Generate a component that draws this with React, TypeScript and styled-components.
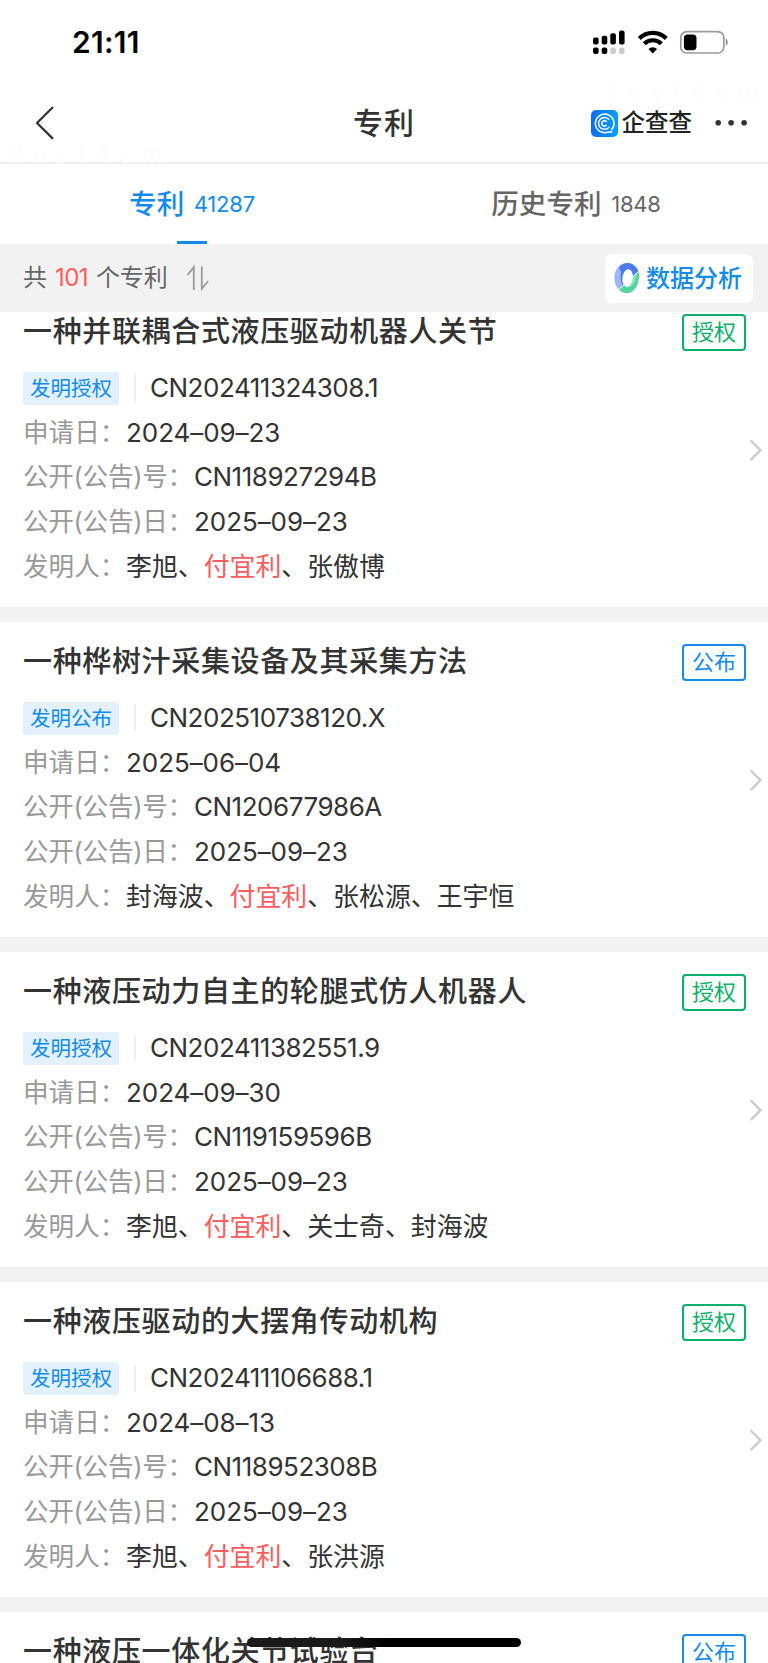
import React from 'react';
import styled, { createGlobalStyle } from 'styled-components';

const Global = createGlobalStyle`
  * { box-sizing: border-box; }
  body {
    margin: 0;
    background: #fff;
    font-family: Inter, "Noto Sans CJK SC", sans-serif;
    color: #333;
  }
`;

const Screen = styled.div`
  position: relative;
  width: 768px;
  height: 1663px;
  overflow: hidden;
  display: flex;
  flex-direction: column;
  white-space: nowrap;
`;

const StatusBar = styled.header`
  flex: none;
  height: 84px;
  display: flex;
  justify-content: space-between;
  align-items: center;
  padding: 0 39px 0 72px;
`;

const Clock = styled.time`
  font-size: 30px;
  font-weight: 600;
  color: #000;
  line-height: 30px;
  letter-spacing: 0.3px;
`;

const NavBar = styled.nav`
  flex: none;
  height: 80px;
  border-bottom: 2px solid #efefef;
  display: grid;
  grid-template-columns: 1fr auto 1fr;
  align-items: center;
  padding: 0 20px;
`;

const NavTitle = styled.h1`
  margin: 0;
  font-size: 30px;
  line-height: 40px;
  font-weight: 500;
  letter-spacing: 1px;
`;

const NavRight = styled.div`
  display: flex;
  justify-content: flex-end;
  align-items: center;
`;

const BrandName = styled.span`
  margin: 0 22px 0 4px;
  font-size: 23.5px;
  line-height: 30px;
  font-weight: 500;
  color: #222;
`;

const Tabs = styled.div`
  flex: none;
  height: 80px;
  display: grid;
  grid-template-columns: 1fr 1fr;
`;

const Tab = styled.div<{ $active?: boolean }>`
  position: relative;
  display: flex;
  justify-content: center;
  align-items: center;
  gap: 9.5px;
  color: ${(p) => (p.$active ? '#128bed' : '#666')};
  font-size: 27.6px;
  line-height: 40px;
  font-weight: 500;
  ${(p) =>
    p.$active &&
    `&::after {
      content: '';
      position: absolute;
      left: 177px;
      bottom: 0;
      width: 30px;
      height: 3px;
      background: #128bed;
    }`}
`;

const TabCount = styled.span`
  font-size: 22px;
  font-weight: 400;
  letter-spacing: -0.2px;
`;

const Summary = styled.div`
  flex: none;
  height: 68px;
  background: #f2f2f2;
  display: flex;
  align-items: center;
  justify-content: space-between;
  padding: 0 15px 0 23px;
  color: #666;
  font-size: 24px;
  line-height: 36px;
`;

const SummaryText = styled.div`
  display: flex;
  align-items: center;
  gap: 8px;
  svg { margin-left: 11px; }
`;

const Highlight = styled.em`
  font-style: normal;
  color: #ff5d5d;
`;

const Total = styled(Highlight)`
  letter-spacing: -0.6px;
`;

const AnalysisButton = styled.button`
  width: 148px;
  height: 49px;
  border: 0;
  border-radius: 7px;
  background: #fff;
  color: #128bed;
  font: inherit;
  font-weight: 500;
  display: flex;
  align-items: center;
  gap: 6px;
  padding: 2px 0 0 9px;
  svg { margin-bottom: 2px; }
`;

const List = styled.main`
  flex: 1;
  min-height: 0;
  overflow: hidden;
  background: #f2f2f2;
  display: flex;
  flex-direction: column;
  gap: 15px;

  > :first-child { margin-top: -20px; }
`;

const Card = styled.article`
  flex: none;
  height: 315px;
  background: #fff;
  display: flex;
  align-items: center;
  padding-right: 5px;
`;

const CardBody = styled.div`
  flex: 1;
  align-self: stretch;
  padding: 18px 0 0 23px;
`;

const TitleRow = styled.div`
  display: flex;
  justify-content: space-between;
  align-items: center;
  height: 44px;
  margin-bottom: 12px;
`;

const Title = styled.h2`
  margin: 0;
  font-size: 29px;
  line-height: 44px;
  font-weight: 500;
  letter-spacing: 0.65px;
`;

const State = styled.span<{ $tone: string }>`
  width: 64px;
  height: 37px;
  margin-right: 3px;
  border: 2px solid ${(p) => p.$tone};
  border-radius: 4px;
  color: ${(p) => p.$tone};
  font-size: 22px;
  line-height: 33px;
  text-align: center;
`;

const Line = styled.div`
  display: flex;
  align-items: center;
  height: 44.6px;
  font-size: 26px;
  line-height: 44px;
`;

const Kind = styled.span`
  width: 96px;
  height: 33px;
  border-radius: 3px;
  background: #e3f1fd;
  color: #128bed;
  font-size: 20.5px;
  line-height: 33px;
  text-align: center;
`;

const Divider = styled.i`
  width: 2px;
  height: 26px;
  margin: 0 14px 0 15px;
  background: #eee;
`;

const Label = styled.span<{ $wide?: boolean }>`
  width: ${(p) => (p.$wide ? 171 : 103)}px;
  color: #999;
  font-size: 25.6px;
  letter-spacing: ${(p) => (p.$wide ? -0.3 : 0)}px;
`;

const Value = styled.span`
  color: #333;
`;

const CodeValue = styled(Value)`
  letter-spacing: -0.48px;
`;

const DateValue = styled(Value)`
  letter-spacing: -0.06px;
`;

const People = styled(Value)`
  font-size: 25.9px;
`;

const Watermark = styled.span<{ $x: number; $y: number }>`
  position: absolute;
  left: ${(p) => p.$x}px;
  top: ${(p) => p.$y}px;
  font-size: 25px;
  line-height: 30px;
  letter-spacing: 8.6px;
  color: #fdfdfd;
`;

const HomeIndicator = styled.div`
  position: absolute;
  left: 247px;
  top: 1638px;
  width: 274px;
  height: 9px;
  border-radius: 5px;
  background: linear-gradient(90deg, #1a1a1a 35%, #000 52%);
`;

const StatusIcons = () => (
  <svg width="138" height="26" viewBox="0 0 138 26">
    <g>
      <rect x="2" y="8.5" width="5.6" height="7" rx="2" />
      <rect x="10.7" y="6.7" width="5.6" height="8.8" rx="2" />
      <rect x="19.3" y="4.2" width="5.6" height="11.3" rx="2" />
      <rect x="28" y="1.5" width="5.6" height="14" rx="2" />
      <rect x="2" y="18.5" width="5.6" height="6.4" rx="2" />
      <rect x="10.7" y="18.5" width="5.6" height="6.4" rx="2" />
      <rect x="19.3" y="18.5" width="5.6" height="6.4" rx="2" fill="#ccc" />
      <rect x="28" y="18.5" width="5.6" height="6.4" rx="2" fill="#ccc" />
    </g>
    <g fill="none" stroke="#000" strokeWidth="4.2">
      <path d="M48.3 9.4a19.2 19.2 0 0 1 27 0" />
      <path d="M53.3 14.8a12 12 0 0 1 17 0" />
    </g>
    <path d="M61.8 24.4l-4.3-4.5a6.3 6.3 0 0 1 8.6 0z" />
    <rect x="89.8" y="2.6" width="43" height="21.4" rx="6" fill="none" stroke="#999" strokeWidth="1.7" />
    <rect x="92.9" y="5.4" width="12.6" height="15.8" rx="3.6" />
    <path d="M134.8 9.2v7.8c2.4-1.4 2.4-6.4 0-7.8z" fill="#888" />
  </svg>
);

const BackIcon = () => (
  <svg width="36" height="36" viewBox="-14 0 36 36" fill="none" stroke="#333" strokeWidth="2.3" strokeLinecap="round" strokeLinejoin="round">
    <path d="M18.3 2.7L3 18 18.3 33.1" />
  </svg>
);

const BrandIcon = () => (
  <svg width="27" height="27" viewBox="0 0 27 27">
    <defs>
      <linearGradient id="brand" x1="0" x2="1">
        <stop offset="0" stopColor="#0a6cff" />
        <stop offset="1" stopColor="#05a0fd" />
      </linearGradient>
    </defs>
    <rect width="27" height="27" rx="5" fill="url(#brand)" />
    <g fill="none" stroke="#fff" strokeWidth="1.5" strokeLinecap="round">
      <path d="M20.6 19.6A9.3 9.3 0 1 0 17.2 22l3.6.1" />
      <path d="M17.6 9.2A5.9 5.9 0 1 0 17.8 17.4" />
      <path d="M15.2 11.5A2.6 2.6 0 1 0 15.2 15.3" />
    </g>
  </svg>
);

const MoreIcon = () => (
  <svg width="34" height="8" viewBox="0 0 34 8" fill="#333">
    <circle cx="4.2" cy="3.8" r="2.8" />
    <circle cx="17.1" cy="3.8" r="2.8" />
    <circle cx="30.1" cy="3.8" r="2.8" />
  </svg>
);

const SortIcon = () => (
  <svg width="23" height="26" viewBox="0 0 23 26" fill="none" stroke="#999" strokeWidth="1.8">
    <path d="M0.5 10L6.8 2.2V25" />
    <path d="M14.8 1.4V23.8L21.2 16" />
  </svg>
);

const RingIcon = () => (
  <svg width="26" height="32" viewBox="0 0 26 32">
    <ellipse cx="12" cy="16" rx="11.6" ry="14.8" fill="#9db5fa" />
    <path d="M5 5.5C10-.8 20-1 24.5 9.5L17 16 9 14z" fill="#4a7be9" />
    <path d="M9 6C5.5 11 6 20 9 24l3-3V8z" fill="#4a7be9" />
    <path d="M24.5 9.3C27 21 20 32.8 11 30.8 8 30.2 6 28.8 4.9 27.3z" fill="#4fd49b" />
    <path d="M23 10.8L18 16 17 22 12 25.5l4-.5c4-2 7-8 7-14.2z" fill="#86e6bf" />
    <ellipse cx="13.6" cy="16" rx="5.2" ry="8.8" fill="#fff" transform="rotate(8 13.6 16)" />
    <path d="M3.6 28.6L25.4 8.6" stroke="#fff" strokeWidth="1" />
  </svg>
);

const ChevronIcon = () => (
  <svg width="14" height="24" viewBox="0 0 14 24" fill="none" stroke="#ccc" strokeWidth="2.4" strokeLinecap="round">
    <path d="M2.3 3L11.5 12.2 2.3 21.4" />
  </svg>
);

const GREEN = '#0bb06b';
const BLUE = '#128bed';

type Patent = {
  title: string;
  granted: boolean;
  code: string;
  applied: string;
  notice: string;
  published: string;
  before: string;
  after: string;
};

const patents: Patent[] = [
  { title: '一种并联耦合式液压驱动机器人关节', granted: true, code: 'CN202411324308.1', applied: '2024–09–23', notice: 'CN118927294B', published: '2025–09–23', before: '李旭、', after: '、张傲博' },
  { title: '一种桦树汁采集设备及其采集方法', granted: false, code: 'CN202510738120.X', applied: '2025–06–04', notice: 'CN120677986A', published: '2025–09–23', before: '封海波、', after: '、张松源、王宇恒' },
  { title: '一种液压动力自主的轮腿式仿人机器人', granted: true, code: 'CN202411382551.9', applied: '2024–09–30', notice: 'CN119159596B', published: '2025–09–23', before: '李旭、', after: '、关士奇、封海波' },
  { title: '一种液压驱动的大摆角传动机构', granted: true, code: 'CN202411106688.1', applied: '2024–08–13', notice: 'CN118952308B', published: '2025–09–23', before: '李旭、', after: '、张洪源' },
];

const TitleBar = ({ title, granted }: { title: string; granted: boolean }) => (
  <TitleRow>
    <Title>{title}</Title>
    <State $tone={granted ? GREEN : BLUE}>{granted ? '授权' : '公布'}</State>
  </TitleRow>
);

const PatentCard = ({ item }: { item: Patent }) => (
  <Card>
    <CardBody>
      <TitleBar title={item.title} granted={item.granted} />
      <Line>
        <Kind>{item.granted ? '发明授权' : '发明公布'}</Kind>
        <Divider />
        <CodeValue>{item.code}</CodeValue>
      </Line>
      <Line><Label>申请日：</Label><DateValue>{item.applied}</DateValue></Line>
      <Line><Label $wide>公开(公告)号：</Label><CodeValue>{item.notice}</CodeValue></Line>
      <Line><Label $wide>公开(公告)日：</Label><DateValue>{item.published}</DateValue></Line>
      <Line>
        <Label>发明人：</Label>
        <People>{item.before}<Highlight>付宜利</Highlight>{item.after}</People>
      </Line>
    </CardBody>
    <ChevronIcon />
  </Card>
);

export default function App() {
  return (
    <Screen>
      <Global />
      <Watermark $x={8} $y={139}>8eyt4sm</Watermark>
      <Watermark $x={604} $y={77}>8eyt4sm</Watermark>
      <StatusBar>
        <Clock>21:11</Clock>
        <StatusIcons />
      </StatusBar>
      <NavBar>
        <BackIcon />
        <NavTitle>专利</NavTitle>
        <NavRight>
          <BrandIcon />
          <BrandName>企查查</BrandName>
          <MoreIcon />
        </NavRight>
      </NavBar>
      <Tabs>
        <Tab $active>专利<TabCount>41287</TabCount></Tab>
        <Tab>历史专利<TabCount>1848</TabCount></Tab>
      </Tabs>
      <Summary>
        <SummaryText>
          <span>共</span><Total>101</Total><span>个专利</span>
          <SortIcon />
        </SummaryText>
        <AnalysisButton><RingIcon />数据分析</AnalysisButton>
      </Summary>
      <List>
        {patents.map((p) => <PatentCard key={p.code} item={p} />)}
        <Card>
          <CardBody><TitleBar title="一种液压一体化关节试验台" granted={false} /></CardBody>
          <ChevronIcon />
        </Card>
      </List>
      <HomeIndicator />
    </Screen>
  );
}
